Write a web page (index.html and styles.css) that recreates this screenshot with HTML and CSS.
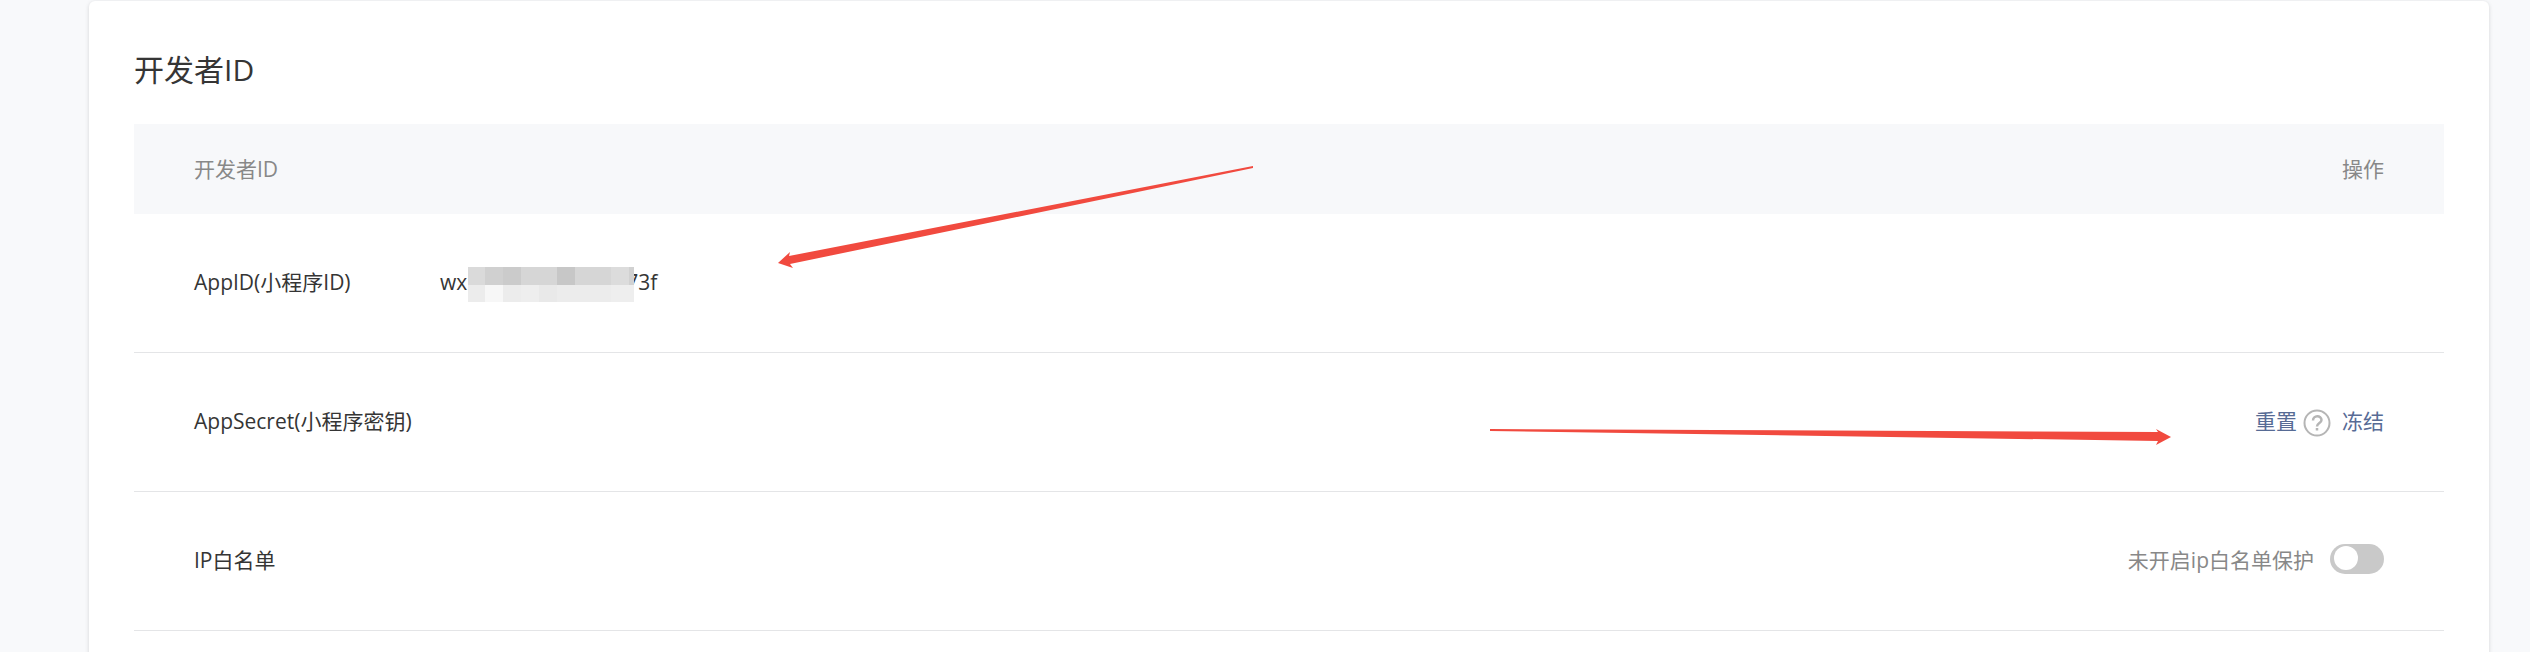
FILE: index.html
```html
<!DOCTYPE html>
<html lang="zh-CN">
<head>
    <meta charset="UTF-8">
    <meta name="viewport" content="width=device-width, initial-scale=1.0">
    <title>开发者ID</title>
    <link rel="stylesheet" href="styles.css">
</head>
<body>
    <main class="card">
        <h2 class="card-title">开发者ID</h2>

        <table class="dev-table">
            <thead>
                <tr>
                    <th class="name" colspan="2">开发者ID</th>
                    <th class="action">操作</th>
                </tr>
            </thead>
            <tbody>
                <tr>
                    <td class="name">AppID(小程序ID)</td>
                    <td>
                        <div class="app-id">
                            <span>wx</span>
                            <svg class="mosaic" viewBox="0 0 166 35" width="166" height="35" shape-rendering="crispEdges">
                                <rect width="166" height="18" fill="#d6d6d6"/>
                                <rect width="17" height="18" fill="#dadada"/>
                                <rect x="17" width="18" height="18" fill="#d0d0d0"/>
                                <rect x="35" width="18" height="18" fill="#cbcbcb"/>
                                <rect x="89" width="18" height="18" fill="#c7c7c7"/>
                                <rect x="143" width="18" height="18" fill="#dcdcdc"/>
                                <rect x="161" width="5" height="18" fill="#d1d1d1"/>
                                <rect y="18" width="166" height="17" fill="#ececec"/>
                                <rect x="17" y="18" width="18" height="17" fill="#f7f7f7"/>
                                <rect x="53" y="18" width="18" height="17" fill="#eeeeee"/>
                                <rect x="71" y="18" width="18" height="17" fill="#e9e9e9"/>
                                <rect x="143" y="18" width="23" height="17" fill="#eeeeee"/>
                            </svg>
                            <span>73f</span>
                        </div>
                    </td>
                    <td class="action"></td>
                </tr>
                <tr>
                    <td class="name">AppSecret(小程序密钥)</td>
                    <td></td>
                    <td class="action">
                        <div class="links">
                            <a href="#">重置</a>
                            <svg class="help" viewBox="0 0 28 28" width="28" height="28" fill="none" stroke="#b5b5b5" stroke-width="2">
                                <circle cx="14" cy="14" r="12.5"/>
                                <path stroke-width="2.500" d="M10 11.500c0-5.500 8.500-5.500 8.500-.5 0 3-4.500 3-4.500 6.500M14 19v2.500"/>
                            </svg>
                            <a href="#">冻结</a>
                        </div>
                    </td>
                </tr>
                <tr>
                    <td class="name">IP白名单</td>
                    <td></td>
                    <td class="action">
                        <label class="switch">
                            未开启ip白名单保护
                            <input type="checkbox">
                        </label>
                    </td>
                </tr>
            </tbody>
        </table>
    </main>

    <svg class="arrow arrow-id" viewBox="0 0 478 106" width="478" height="106" fill="#f14a3f">
        <path d="M1 97 L13 86 L12 90 L476 0 L476 2 L13 98 L16 102 Z"/>
    </svg>
    <svg class="arrow arrow-reset" viewBox="0 0 682 26" width="682" height="26" fill="#f14a3f">
        <path d="M0 5 L668 8 L666 5 L681 13 L666 21 L668 17 L0 7 Z"/>
    </svg>
</body>
</html>
```
FILE: styles.css
```css
body {
    position: relative;
    margin: 0;
    padding: 1px 41px 0 89px;
    background-color: #f8f9fb;
    color: #353535;
    font-family: "Open Sans", "Noto Sans CJK SC", sans-serif;
    font-size: 21px;
    line-height: 32px;
    overflow: hidden;
}

.card {
    padding: 46px 45px 45px;
    background-color: #fff;
    border-radius: 6px;
    box-shadow: 0 1px 4px rgba(0, 0, 0, 0.15);
}

.card-title {
    margin: 0 0 32px;
    font-size: 30px;
    font-weight: 400;
    line-height: 45px;
}

.dev-table {
    width: 100%;
    border-collapse: separate;
    border-spacing: 0;
}

th {
    height: 90px;
    padding: 0;
    background-color: #f7f8fa;
    color: #888;
    font-weight: 400;
    text-align: left;
}

td {
    height: 136px;
    padding: 0 0 2px;
    border-bottom: 1px solid #e4e5e7;
}

.name {
    width: 246px;
    padding-left: 60px;
}

.action {
    padding-right: 60px;
    text-align: right;
}

.app-id {
    display: flex;
    align-items: center;
}

/* covers the middle of the id */
.mosaic {
    position: relative;
    margin: 4px -8px 0 1px;
}

.links {
    display: flex;
    justify-content: flex-end;
    align-items: center;
}

.help {
    margin: 3px 11px 0 6px;
}

a {
    color: #576b95;
    text-decoration: none;
}

.switch {
    display: flex;
    justify-content: flex-end;
    align-items: center;
    gap: 16px;
    color: #888;
}

.switch input {
    appearance: none;
    display: flex;
    width: 54px;
    height: 30px;
    margin: 0 0 2px;
    padding: 2px 4px;
    box-sizing: border-box;
    border-radius: 15px;
    background-color: #c9c9c9;
    cursor: pointer;
}

.switch input::before {
    content: "";
    width: 24px;
    height: 24px;
    border-radius: 50%;
    background-color: #fff;
}

.switch input:checked {
    justify-content: flex-end;
    background-color: #1aad19;
}

.arrow {
    position: absolute;
    pointer-events: none;
}

.arrow-id {
    left: 777px;
    top: 166px;
}

.arrow-reset {
    right: 358px;
    top: 424px;
}
```
